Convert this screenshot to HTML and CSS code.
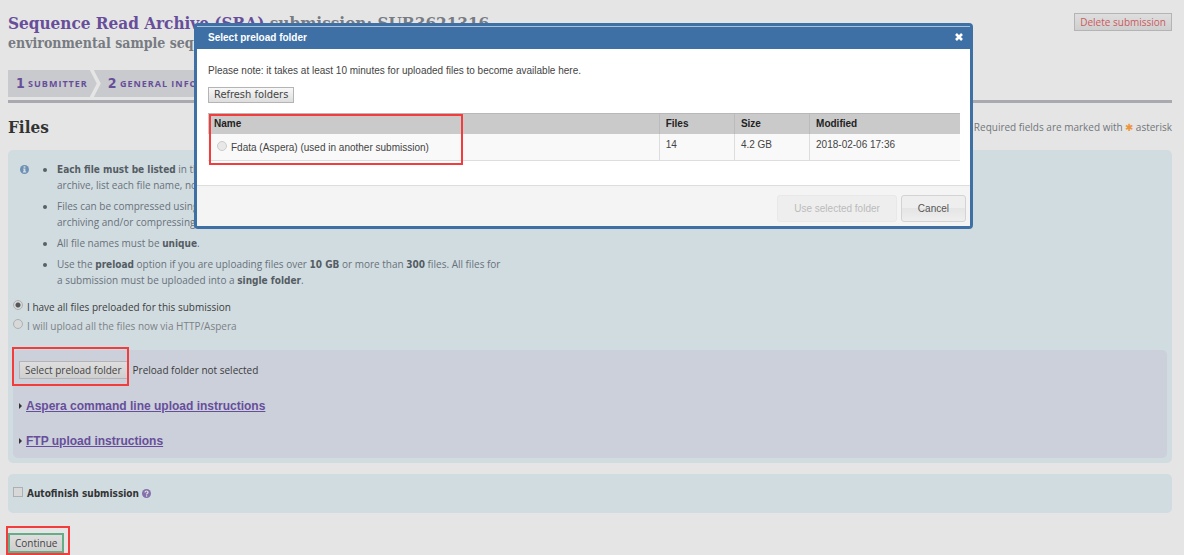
FILE: index.html
```html
<!DOCTYPE html>
<html lang="en">
<head>
    <meta charset="UTF-8">
    <meta name="viewport" content="width=device-width, initial-scale=1.0">
    <title>Sequence Read Archive (SRA) submission</title>
    <link rel="stylesheet" href="styles.css">
</head>
<body>

    <div class="page">
        <header class="page-header">
            <div class="titles">
                <h1><a href="#">Sequence Read Archive (SRA)</a> submission: SUB3621316</h1>
                <p class="subtitle">environmental sample sequences</p>
            </div>
            <button type="button" class="btn delete">Delete submission</button>
        </header>

        <nav class="steps">
            <a href="#" class="step"><b>1</b> SUBMITTER</a>
            <a href="#" class="step"><b>2</b> GENERAL INFO</a>
        </nav>

        <div class="section-head">
            <h2>Files</h2>
            <p>Required fields are marked with <span class="star">✱</span> asterisk</p>
        </div>

        <section class="panel">
            <div class="notes">
                <svg class="info-icon" viewBox="0 0 10 10">
                    <circle cx="5" cy="5" r="5" fill="#6f90b5"/>
                    <path d="M4 1.5h2v1.5H4zM3.5 4H6v3h.8v1.2H3.3V7H4V5.1h-.5z" fill="#d1dce1"/>
                </svg>
                <ul>
                    <li><b>Each file must be listed</b> in the SRA metadata table. For a tar<br>archive, list each file name, not the archive name.</li>
                    <li>Files can be compressed using gzip or bzip2, but<br>archiving and/or compressing is not required.</li>
                    <li>All file names must be <b>unique</b>.</li>
                    <li>Use the <b>preload</b> option if you are uploading files over <b>10 GB</b> or more than <b>300</b> files. All files for<br>a submission must be uploaded into a <b>single folder</b>.</li>
                </ul>
            </div>

            <div class="choices">
                <label><input type="radio" name="upload" checked>I have all files preloaded for this submission</label>
                <label class="muted"><input type="radio" name="upload">I will upload all the files now via HTTP/Aspera</label>
            </div>

            <div class="preload">
                <div class="folder-row">
                    <span class="marked mark-select"><button type="button" class="btn">Select preload folder</button></span>
                    <span>Preload folder not selected</span>
                </div>
                <h3><a href="#">Aspera command line upload instructions</a></h3>
                <h3><a href="#">FTP upload instructions</a></h3>
            </div>
        </section>

        <section class="panel autofinish">
            <label><input type="checkbox">Autofinish submission</label>
            <svg class="help-icon" viewBox="0 0 10 10">
                <circle cx="5" cy="5" r="5" fill="#8470ab"/>
                <path d="M3.3 3.8C3.4 1.7 6.8 1.8 6.7 3.7 6.6 4.8 5.1 4.8 5.1 6.1" fill="none" stroke="#e5e5e5" stroke-width="1.3"/>
                <path d="M4.4 7h1.4v1.4H4.4z" fill="#e5e5e5"/>
            </svg>
        </section>

        <div class="submit-row">
            <span class="marked mark-continue"><button type="button" class="btn continue">Continue</button></span>
        </div>
    </div>

    <div class="dialog" role="dialog" aria-labelledby="dialogTitle">
        <div class="dialog-title">
            <span id="dialogTitle">Select preload folder</span>
            <button type="button" class="close" aria-label="Close">
                <svg viewBox="0 0 8 8"><path d="M1 1l6 6M7 1L1 7" stroke="#fff" stroke-width="2.6"/></svg>
            </button>
        </div>
        <div class="dialog-body">
            <p>Please note: it takes at least 10 minutes for uploaded files to become available here.</p>
            <button type="button" class="btn refresh">Refresh folders</button>
            <div class="marked mark-table">
                <table>
                    <thead>
                        <tr><th class="name">Name</th><th class="files">Files</th><th class="size">Size</th><th>Modified</th></tr>
                    </thead>
                    <tbody>
                        <tr>
                            <td><label><input type="radio" name="folder" disabled>Fdata (Aspera) (used in another submission)</label></td>
                            <td>14</td>
                            <td>4.2 GB</td>
                            <td>2018-02-06 17:36</td>
                        </tr>
                    </tbody>
                </table>
            </div>
        </div>
        <div class="dialog-buttons">
            <button type="button" class="action" disabled>Use selected folder</button>
            <button type="button" class="action">Cancel</button>
        </div>
    </div>

</body>
</html>
```
FILE: styles.css
```css
*, *::after {
    box-sizing: border-box;
}
body {
    margin: 0;
    background: #e5e5e5;
    color: #3c3c3c;
    font-family: "Open Sans", "Noto Sans", sans-serif;
    font-size: 10px;
    line-height: 16px;
}
h1, h2, h3, p, ul {
    margin: 0;
}
button, input {
    font-family: inherit;
    font-size: inherit;
}
.page {
    padding: 13px 12px 0 8px;
}
.page-header {
    display: flex;
    justify-content: space-between;
    align-items: flex-start;
    height: 57px;
}
h1, h2, .subtitle {
    font-family: "DejaVu Serif Condensed", "DejaVu Serif", serif;
    font-weight: bold;
}
h1 {
    font-size: 17px;
    line-height: 20px;
    color: #777b82;
}
h1 a {
    color: #674e9b;
    text-decoration: none;
}
.subtitle {
    font-size: 14px;
    line-height: 20px;
    color: #777b82;
}
.btn {
    height: 18px;
    padding: 0 5px;
    border: 1px solid #b4b4b4;
    background: linear-gradient(#dedede, #cfcfcf);
    color: #444;
    line-height: 14px;
}
.delete {
    color: #cb5a60;
}
.steps {
    display: flex;
    height: 33px;
    padding-bottom: 3px;
    border-bottom: 3px solid #a9aaaf;
}
.step {
    padding: 0 9px 0 8px;
    background: #c9cacd;
    clip-path: polygon(0 0, calc(100% - 7px) 0, 100% 50%, calc(100% - 7px) 100%, 0 100%);
    color: #674e9b;
    font-size: 9px;
    font-weight: bold;
    letter-spacing: 1px;
    line-height: 27px;
    text-decoration: none;
}
.step b {
    font-family: "DejaVu Sans Condensed", "DejaVu Sans", sans-serif;
    font-size: 14px;
    letter-spacing: 0;
    vertical-align: -1px;
}
.step + .step {
    margin-left: -3px;
    padding-left: 14px;
    clip-path: polygon(0 0, 100% 0, 100% 100%, 0 100%, 7px 50%);
}
.section-head {
    display: flex;
    justify-content: space-between;
    align-items: center;
    height: 47px;
    color: #72767b;
}
h2 {
    font-size: 17px;
    color: #333;
}
.star {
    color: #ec953d;
}
.panel {
    padding: 11px 5px 5px;
    border-radius: 5px;
    background: #d1dce1;
}
.notes {
    display: flex;
    color: #68717a;
}
.notes b {
    color: #555c63;
    font-family: "DejaVu Sans Condensed", "DejaVu Sans", sans-serif;
    line-height: 10px;
}
.info-icon {
    width: 9px;
    height: 9px;
    margin: 4px 0 0 7px;
}
.notes ul {
    padding-left: 28px;
}
.notes li {
    margin-bottom: 5px;
    white-space: nowrap;
}
.notes li::marker {
    color: #596067;
}
.choices {
    margin: 4px 0 15px;
}
label {
    display: flex;
    align-items: center;
}
.choices label {
    height: 19px;
}
.muted {
    color: #7c8185;
}
input {
    appearance: none;
    flex: none;
    width: 10px;
    height: 10px;
    margin: 0 4px 3px 0;
    border: 1px solid #adb0b2;
    background: #d8d8d8;
}
input[type="radio"] {
    border-radius: 50%;
}
input[type="radio"]:checked {
    background: radial-gradient(circle, #555 2px, #d8d8d8 3px);
}
.preload {
    padding: 11px 6px 9px;
    border-radius: 5px;
    background: #cbd0da;
}
.folder-row {
    display: flex;
    align-items: center;
    gap: 5px;
    height: 18px;
}
h3 {
    display: flex;
    align-items: center;
    margin-top: 19px;
    font-family: "Liberation Sans", Arial, sans-serif;
    font-size: 12px;
}
h3::before {
    content: "";
    margin-right: 4px;
    border: 3px solid transparent;
    border-left-color: #333;
    border-right-width: 0;
}
h3 a {
    color: #674e9b;
}
.autofinish {
    display: flex;
    align-items: center;
    gap: 3px;
    height: 39px;
    margin: 11px 0 20px;
    padding: 0 5px;
    color: #333;
    font-family: "DejaVu Sans Condensed", "DejaVu Sans", sans-serif;
    font-weight: bold;
}
.help-icon {
    width: 9px;
    height: 9px;
}
.submit-row {
    display: flex;
    padding-bottom: 2px;
}
.continue {
    height: 20px;
    border: 2px solid #65ad86;
}

/* red frames drawn over the highlighted controls */
.marked {
    position: relative;
    display: inline-flex;
}
.marked::after {
    content: "";
    position: absolute;
    border: 2px solid #f33c3c;
    pointer-events: none;
}
.mark-select::after {
    inset: -14px -1px -7px -7px;
}
.mark-continue::after {
    inset: -7px -6px -2px -2px;
}
.mark-table::after {
    top: 1px;
    left: 1px;
    width: 254px;
    height: 51px;
}

.dialog {
    position: absolute;
    top: 23px;
    left: 194px;
    right: 211px;
    border: 3px solid #3e70a6;
    border-radius: 4px;
    background: #fff;
    color: #444;
    font-family: "Liberation Sans", Arial, sans-serif;
    font-size: 10px;
}
.dialog-title {
    display: flex;
    justify-content: space-between;
    align-items: center;
    height: 23px;
    padding: 0 7px 0 11px;
    border-top: 1px solid #a9c2dc;
    background: #3e70a6;
    color: #fff;
    font-weight: bold;
}
.close {
    display: flex;
    margin-bottom: 3px;
    padding: 0;
    border: 0;
    background: none;
}
.close svg {
    width: 8px;
    height: 8px;
}
.dialog-body {
    padding: 14px 10px 24px 11px;
}
.refresh {
    height: 16px;
    margin: 8px 0 10px;
    background: linear-gradient(#f8f8f8, #ddd);
    font-family: "DejaVu Sans Condensed", "DejaVu Sans", sans-serif;
    font-size: 11px;
}
.mark-table {
    display: flex;
}
table {
    width: 100%;
    border-collapse: collapse;
    table-layout: fixed;
}
th, td {
    padding: 0 6px;
    border-left: 1px solid #ddd;
    text-align: left;
}
th:first-child, td:first-child {
    border-left: 0;
}
th {
    height: 20px;
    border-top: 1px solid #b8b8b8;
    border-left-color: #bbb;
    background: #cacaca;
    color: #222;
}
td {
    height: 27px;
    padding-bottom: 3px;
    border-bottom: 1px solid #ddd;
    background: #f9f9f9;
}
td:first-child {
    padding: 2px 9px 0;
}
td input {
    border-color: #ccc;
    background: #e8e8e8;
}
.name {
    width: 60%;
}
.files, .size {
    width: 10%;
}
.dialog-buttons {
    display: flex;
    justify-content: flex-end;
    gap: 4px;
    padding: 9px 4px 4px;
    border-top: 1px solid #ddd;
    background: #f4f4f4;
}
.action {
    height: 27px;
    padding: 0 16px;
    border: 1px solid #d3d3d3;
    border-radius: 3px;
    background: linear-gradient(#eee 50%, #e5e5e5 50%, #eee);
    color: #555;
}
.action:disabled {
    border-color: #e8e8e8;
    background: #eee;
    color: #bbb;
}
```
